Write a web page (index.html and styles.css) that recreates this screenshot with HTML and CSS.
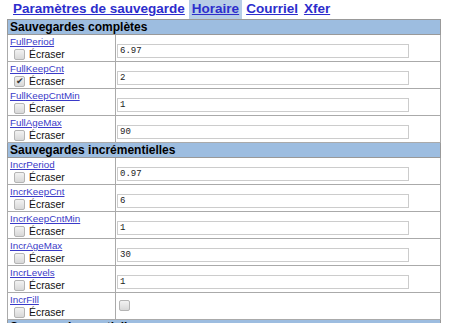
FILE: index.html
```html
<!DOCTYPE html>
<html lang="fr">
<head>
  <meta charset="UTF-8">
  <title>Horaire</title>
  <link rel="stylesheet" href="styles.css">
</head>
<body>
  <div class="page">
    <div class="tabs">
      <a href="#" class="tab">Paramètres de sauvegarde</a>
      <a href="#" class="tab active">Horaire</a>
      <a href="#" class="tab">Courriel</a>
      <a href="#" class="tab">Xfer</a>
    </div>
    <table class="config">
      <colgroup><col class="c-name"><col class="c-val"></colgroup>
      <tr><th colspan="2">Sauvegardes complètes</th></tr>
      <tr>
        <td class="name"><a href="#">FullPeriod</a><label><input type="checkbox" class="box"> Écraser</label></td>
        <td><input type="text" class="val" value="6.97"></td>
      </tr>
      <tr>
        <td class="name"><a href="#">FullKeepCnt</a><label><input type="checkbox" class="box" checked> Écraser</label></td>
        <td><input type="text" class="val" value="2"></td>
      </tr>
      <tr>
        <td class="name"><a href="#">FullKeepCntMin</a><label><input type="checkbox" class="box"> Écraser</label></td>
        <td><input type="text" class="val" value="1"></td>
      </tr>
      <tr>
        <td class="name"><a href="#">FullAgeMax</a><label><input type="checkbox" class="box"> Écraser</label></td>
        <td><input type="text" class="val" value="90"></td>
      </tr>
      <tr><th colspan="2">Sauvegardes incrémentielles</th></tr>
      <tr>
        <td class="name"><a href="#">IncrPeriod</a><label><input type="checkbox" class="box"> Écraser</label></td>
        <td><input type="text" class="val" value="0.97"></td>
      </tr>
      <tr>
        <td class="name"><a href="#">IncrKeepCnt</a><label><input type="checkbox" class="box"> Écraser</label></td>
        <td><input type="text" class="val" value="6"></td>
      </tr>
      <tr>
        <td class="name"><a href="#">IncrKeepCntMin</a><label><input type="checkbox" class="box"> Écraser</label></td>
        <td><input type="text" class="val" value="1"></td>
      </tr>
      <tr>
        <td class="name"><a href="#">IncrAgeMax</a><label><input type="checkbox" class="box"> Écraser</label></td>
        <td><input type="text" class="val" value="30"></td>
      </tr>
      <tr>
        <td class="name"><a href="#">IncrLevels</a><label><input type="checkbox" class="box"> Écraser</label></td>
        <td><input type="text" class="val" value="1"></td>
      </tr>
      <tr>
        <td class="name"><a href="#">IncrFill</a><label><input type="checkbox" class="box"> Écraser</label></td>
        <td><input type="checkbox" class="box flag"></td>
      </tr>
      <tr><th colspan="2">Sauvegardes partielles</th></tr>
    </table>
  </div>
</body>
</html>
```

FILE: styles.css
```css
body { margin: 0; background: #fff; font-family: "Liberation Sans", Arial, sans-serif; color: #000; }
.page { padding-left: 7px; }
.tabs { height: 19px; display: flex; align-items: center; gap: 2px; padding-left: 4px; }
.tab { font-size: 13.5px; font-weight: bold; color: #2d2dcc; text-decoration: underline; padding: 1px 2px 2px; line-height: 16px; }
.tab.active { background: #b6cde6; padding: 1px 3px 2px; }
.config { border-collapse: collapse; width: 434px; border: 1px solid #777; table-layout: fixed; }
.c-name { width: 108px; }
.config th { background: #9dbde0; text-align: left; font-size: 12px; font-weight: bold; height: 14px; padding: 0 2px; line-height: 14px; border: 1px solid #999; }
.config td { border: 1px solid #aaa; height: 26px; padding: 0 1px; vertical-align: middle; }
.name a { display: block; font-size: 9.8px; color: #3a3ac8; line-height: 12px; margin-left: 1px; }
.name label { display: flex; align-items: center; font-size: 10.4px; line-height: 13px; color: #111; }
.box { appearance: none; -webkit-appearance: none; width: 11px; height: 11px; margin: 0 4px 0 5px; border: 1px solid #b4b4b4; border-radius: 2px; background: linear-gradient(#f2f2f2, #d8d8d8); position: relative; }
.box:checked::after { content: "\2714"; position: absolute; left: 1px; top: -1px; font-size: 9px; color: #333; }
.val { width: 292px; height: 14px; box-sizing: border-box; border: 1px solid #ccc; padding: 0 2px; font-family: "Liberation Mono", monospace; font-size: 9px; color: #222; margin: 0; }
.flag { margin: 0 0 0 2px; }
```
